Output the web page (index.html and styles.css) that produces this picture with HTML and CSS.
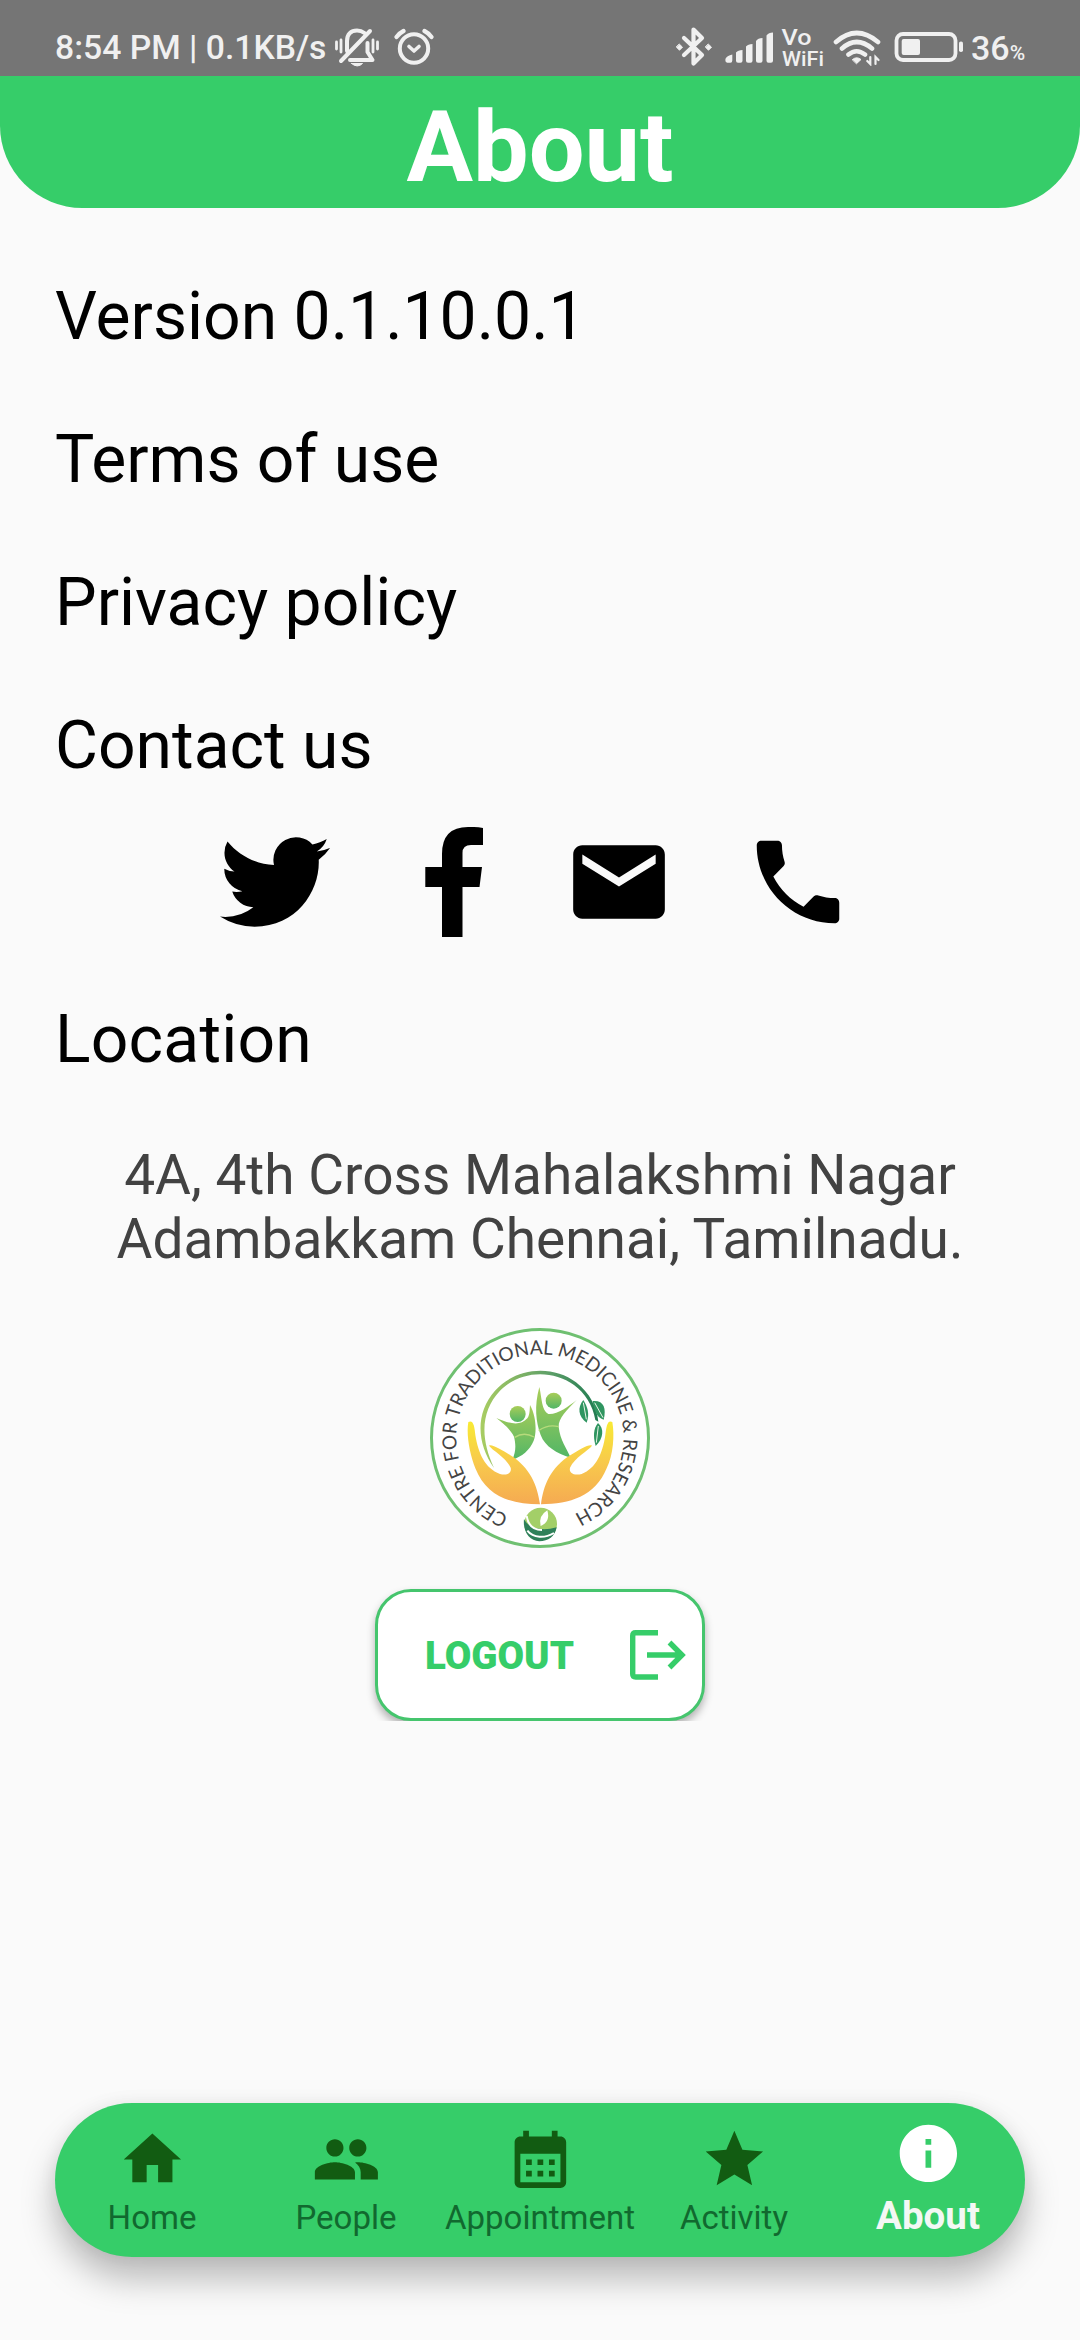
FILE: index.html
```html
<!DOCTYPE html>
<html lang="en">
<head>
<meta charset="utf-8">
<title>About</title>
<link rel="stylesheet" href="styles.css">
</head>
<body>
<div class="screen">
  <div class="status">
    <span class="clock">8:54 PM | 0.1KB/s</span>
    <svg class="bell" width="46" height="40" viewBox="334 28 46 40" fill="none" stroke="#f0f0f0" stroke-width="4" stroke-linecap="round" stroke-linejoin="round">
      <path d="M341 61L370 31M347 51V41C347 34 351 30.500 357 30.500C360 30.500 362.500 31.500 364.500 33M350 60H372.500L367.500 52V43"/>
      <path d="M336.500 42v7M341 40v12M377.500 42v7M373 40v12" stroke-width="2.800"/>
      <path d="M351.500 63.500h11q-5 5-11 0z" fill="#f0f0f0" stroke-width="1"/>
    </svg>
    <svg class="alarm" width="40" height="38" viewBox="393.500 28 40 38" fill="none" stroke="#f0f0f0" stroke-linecap="round" stroke-linejoin="round">
      <circle cx="413.500" cy="48.500" r="14.200" stroke-width="4"/>
      <path d="M396 37q3-4 7-6M431 37q-3-4-7-6" stroke-width="4.200"/>
      <path d="M408.500 46.500l5 4.500 5-4.500" stroke-width="3.600"/>
    </svg>
    <svg class="bluetooth" width="38" height="40" viewBox="675 27 38 40" fill="none" stroke="#f0f0f0" stroke-width="4.200" stroke-linejoin="round" stroke-linecap="round">
      <path d="M684 38l18 17-8.500 8.500V29.500L702 38l-18 17"/>
      <path d="M679.500 44.200l3 3-3 3-3-3zM708.500 44.200l3 3-3 3-3-3z" fill="#f0f0f0" stroke-width="1"/>
    </svg>
    <svg class="signal" width="50" height="32" viewBox="725 32 50 32" fill="#f0f0f0">
      <path d="M725.300 60q0-4 7-5.500v6q0 2.200-2 2.200h-3q-2 0-2-2.700zM736 52.500q2-2.500 6.500-2.500v10.700q0 2-2 2H738q-2 0-2-2zM746 46.500q2-2.500 6.500-2.500v16.700q0 2-2 2H748q-2 0-2-2zM756 41q2-3 6.500-3v22.700q0 2-2 2H758q-2 0-2-2zM766.500 35.500q2-3 6.500-3v28.200q0 2-2 2h-2.500q-2 0-2-2z"/>
    </svg>
    <svg class="vowifi" width="44" height="54" viewBox="781 20 44 54" fill="#f0f0f0">
      <text x="781.500" y="44.800" font-size="22" textLength="30" lengthAdjust="spacingAndGlyphs">Vo</text>
      <text x="782" y="66" font-size="21" textLength="42" lengthAdjust="spacingAndGlyphs">WiFi</text>
    </svg>
    <svg class="wifi" width="48" height="36" viewBox="833 30 48 36" fill="none" stroke="#f0f0f0" stroke-width="4.600" stroke-linecap="round">
      <path d="M836 42Q856.500 24 878 42M842 48.500Q856.500 35.500 872 48.500M848.500 54.500Q856.500 48 865 54.500"/>
      <path d="M852.500 59.500q4-3.500 8.500 0l-4.300 4z" fill="#f0f0f0" stroke-width="1"/>
      <path d="M870.300 57v7l-3-3M875.500 64v-7l3 3" stroke-width="2.200"/>
    </svg>
    <svg class="battery" width="70" height="32" viewBox="894 31 70 32">
      <rect x="896.500" y="34" width="59" height="26" rx="6.500" fill="none" stroke="#f0f0f0" stroke-width="3.800"/>
      <rect x="901.700" y="39" width="18.300" height="16" rx="2" fill="#f0f0f0"/>
      <rect x="959" y="41.500" width="4" height="10.500" rx="1.800" fill="#f0f0f0"/>
    </svg>
    <span class="charge">36<small>%</small></span>
  </div>

  <header class="header"><h1>About</h1></header>

  <main class="content">
    <p class="row">Version 0.1.10.0.1</p>
    <p class="row">Terms of use</p>
    <p class="row">Privacy policy</p>
    <p class="row">Contact us</p>
    <div class="contacts">
      <svg class="twitter" viewBox="0 0 24 24"><path d="M23.953 4.57a10 10 0 01-2.825.775 4.958 4.958 0 002.163-2.723c-.951.555-2.005.959-3.127 1.184a4.92 4.92 0 00-8.384 4.482C7.690 8.095 4.067 6.130 1.640 3.162a4.822 4.822 0 00-.666 2.475c0 1.710.870 3.213 2.188 4.096a4.904 4.904 0 01-2.228-.616v.060a4.923 4.923 0 003.946 4.827 4.996 4.996 0 01-2.212.085 4.936 4.936 0 004.604 3.417 9.867 9.867 0 01-6.102 2.105c-.390 0-.779-.023-1.170-.067a13.995 13.995 0 007.557 2.209c9.053 0 13.998-7.496 13.998-13.985 0-.210 0-.420-.015-.630A9.935 9.935 0 0024 4.590z"/></svg>
      <svg class="facebook" viewBox="425 827 58 110"><path d="M442 937V887H425.300V867H442V854Q442 827 468 827Q476 826.700 483 828V845H471Q462.500 845 462.500 853V867H482L479.500 887H462.500V937Z"/></svg>
      <svg class="mail" viewBox="0 0 24 24"><path d="M20 4H4c-1.100 0-1.990.900-1.990 2L2 18c0 1.100.900 2 2 2h16c1.100 0 2-.900 2-2V6c0-1.100-.900-2-2-2zm0 4l-8 5-8-5V6l8 5 8-5v2z"/></svg>
      <svg class="phone" viewBox="0 0 24 24"><path d="M6.620 10.790c1.440 2.830 3.760 5.140 6.590 6.590l2.200-2.200c.270-.270.670-.360 1.020-.240 1.120.370 2.330.570 3.570.570.550 0 1 .450 1 1V20c0 .550-.450 1-1 1-9.390 0-17-7.610-17-17 0-.550.450-1 1-1h3.500c.550 0 1 .450 1 1 0 1.250.200 2.450.570 3.570.110.350.030.740-.250 1.020l-2.200 2.200z"/></svg>
    </div>
    <p class="row location">Location</p>
    <p class="address">4A, 4th Cross Mahalakshmi Nagar<br>Adambakkam Chennai, Tamilnadu.</p>
    <svg class="logo" viewBox="30 24 660 660">
      <defs>
        <linearGradient id="hand" x1="0" y1="0" x2="0" y2="1"><stop offset="0" stop-color="#f8ea35"/><stop offset=".5" stop-color="#f8c94c"/><stop offset="1" stop-color="#f5aa52"/></linearGradient>
        <linearGradient id="body" x1="0" y1="0" x2="0" y2="1"><stop offset="0" stop-color="#a9cd58"/><stop offset="1" stop-color="#52b666"/></linearGradient>
        <linearGradient id="stem" x1="0" y1="0" x2="1" y2="0"><stop offset="0" stop-color="#a9cd62"/><stop offset=".6" stop-color="#5c9e68"/><stop offset="1" stop-color="#1f7a50"/></linearGradient>
        <path id="ring" d="M266 586.700A251 251 0 1 1 462 583"/>
      </defs>
      <circle cx="360" cy="354" r="325.500" fill="#fff" stroke="#6fc071" stroke-width="9"/>
      <text class="ringtext" textLength="1375" lengthAdjust="spacingAndGlyphs"><textPath href="#ring" textLength="1375" lengthAdjust="spacingAndGlyphs">CENTRE FOR TRADITIONAL MEDICINE &amp; RESEARCH</textPath></text>
      <path fill="url(#stem)" d="M222 444C170 370 165 280 225 212C290 140 400 135 468 187C510 220 530 260 535 305L526 300C518 255 495 220 462 195C395 147 300 152 240 212C185 270 178 350 222 444Z"/>
      <g fill="#2f9560">
        <path d="M490 240C472 262 474 290 500 308C510 280 502 260 490 240Z"/>
        <path d="M518 243C550 240 560 262 551 299C528 292 522 268 518 243Z"/>
        <path d="M534 309C553 325 551 355 527 378C519 350 520 325 534 309Z"/>
      </g>
      <path d="M490 248l9 50M524 248l25 45M535 318l-6 50" stroke="#e8f5e8" stroke-width="3" fill="none"/>
      <g fill="url(#body)">
        <circle cx="293" cy="282" r="24"/>
        <path d="M229 294C265 310 300 320 322 295C330 285 329 265 330 255C350 290 350 340 341 362C330 390 305 410 277 419C288 395 288 375 282 350C270 325 250 312 229 294Z"/>
        <circle cx="401" cy="242" r="24"/>
        <path d="M358 201C366 235 364 270 385 282C410 285 445 260 470 240C440 270 415 295 416 320C420 360 440 385 452 413C410 400 375 380 362 345C348 305 342 260 358 201Z"/>
      </g>
      <path d="M284 352q28-18 58-1M356 332q28-20 60-12" stroke="#b7da7b" stroke-width="4" fill="none"/>
      <g fill="url(#hand)">
        <path d="M145 306C160 298 164 320 166 345C175 400 195 445 240 462C262 468 276 458 272 443C258 412 218 392 207 377C215 371 245 390 270 405C330 442 352 495 360 553C270 552 200 530 166 445C150 405 138 345 145 306Z"/>
        <path d="M577 306C562 298 559 320 556 345C548 400 528 445 485 462C462 468 446 458 450 443C464 412 505 392 516 377C508 371 480 388 452 405C392 442 370 495 363 553C450 552 525 530 560 445C580 405 584 345 577 306Z"/>
      </g>
      <circle cx="362" cy="612" r="49" fill="#a3cf68"/>
      <path d="M312 597C325 625 365 635 410 622C405 650 385 664 358 664C328 662 308 635 312 597Z" fill="#2e8059"/>
      <path d="M320 588C325 620 345 630 366 630M322 632C340 655 375 655 402 639" stroke="#fff" stroke-width="6" fill="none"/>
      <path d="M382 571Q392 606 362 618Q354 588 382 571Z" fill="#fff"/>
    </svg>
    <div class="logout-clip">
      <button class="logout"><span>LOGOUT</span>
        <svg width="56" height="51" viewBox="630 1630 56 51" fill="none" stroke="#36cd69" stroke-width="5.400"><path d="M658 1632.700H635.700Q632.700 1632.700 632.700 1635.700V1674Q632.700 1677 635.700 1677H658M647 1655H682M669.500 1642.500L682 1655L669.500 1667.500"/></svg>
      </button>
    </div>
  </main>

  <nav class="nav">
    <a class="item"><svg viewBox="0 0 24 24"><path d="M10 20v-6h4v6h5v-8h3L12 3 2 12h3v8z"/></svg><span>Home</span></a>
    <a class="item"><svg viewBox="0 0 24 24"><path d="M16 11c1.660 0 2.990-1.340 2.990-3S17.660 5 16 5s-3 1.340-3 3 1.340 3 3 3zm-8 0c1.660 0 2.990-1.340 2.990-3S9.660 5 8 5 5 6.340 5 8s1.340 3 3 3zm0 2c-2.330 0-7 1.170-7 3.500V19h14v-2.500c0-2.330-4.670-3.500-7-3.500zm8 0c-.290 0-.620.020-.970.050 1.160.840 1.970 1.970 1.970 3.450V19h6v-2.500c0-2.330-4.670-3.500-7-3.500z"/></svg><span>People</span></a>
    <a class="item"><svg viewBox="0 0 24 24"><path d="M19 4h-1V2h-2v2H8V2H6v2H5c-1.110 0-1.990.900-1.990 2L3 20c0 1.100.890 2 2 2h14c1.100 0 2-.900 2-2V6c0-1.100-.900-2-2-2zm0 16H5V10h14v10zM9 14H7v-2h2v2zm4 0h-2v-2h2v2zm4 0h-2v-2h2v2zm-8 4H7v-2h2v2zm4 0h-2v-2h2v2zm4 0h-2v-2h2v2z"/></svg><span>Appointment</span></a>
    <a class="item"><svg viewBox="0 0 24 24"><path d="M12 17.270L18.180 21l-1.640-7.030L22 9.240l-7.190-.610L12 2 9.190 8.630 2 9.240l5.460 4.730L5.820 21z"/></svg><span>Activity</span></a>
    <a class="item active"><svg viewBox="0 0 24 24"><path d="M12 2C6.480 2 2 6.480 2 12s4.480 10 10 10 10-4.480 10-10S17.520 2 12 2zm1 15h-2v-6h2v6zm0-8h-2V7h2v2z"/></svg><span>About</span></a>
  </nav>
</div>
</body>
</html>
```
FILE: styles.css
```css
* { box-sizing: border-box; margin: 0; padding: 0; }
body { background: #fafafa; font-family: Roboto, "Liberation Sans", sans-serif; }
svg { display: block; flex: none; }
.screen { width: 1080px; height: 2340px; display: flex; flex-direction: column; overflow: hidden; }

.status { height: 76px; background: #757575; color: #f0f0f0; display: flex; align-items: flex-start; padding-left: 55px; font-size: 34px; font-weight: 500; line-height: 40px; }
.clock { width: 279px; margin-top: 28px; white-space: nowrap; font-size: 33.7px; }
.bell { margin-top: 28px; }
.alarm { margin: 28px 0 0 13.5px; }
.bluetooth { margin: 27px 0 0 241.5px; }
.signal { margin: 32px 0 0 12px; }
.vowifi { margin: 20px 0 0 6px; font-weight: 500; overflow: visible; }
.wifi { margin: 30px 0 0 8px; }
.battery { margin: 31px 0 0 13px; }
.charge { margin: 28px 0 0 7px; white-space: nowrap; }
.charge small { font-size: 21px; }

.header { height: 132px; background: #36cd69; border-radius: 0 0 82.5px 82.5px; display: flex; justify-content: center; }
.header h1 { color: #fff; font-size: 99px; line-height: 116px; font-weight: 700; margin-top: 13px; }

.content { flex: 1; padding: 0 55px; display: flex; flex-direction: column; align-items: center; }
.row { align-self: stretch; font-size: 66px; line-height: 77px; margin-bottom: 66px; color: #000; }
.row:first-child { margin-top: 70px; }
.contacts { display: flex; align-self: stretch; height: 110px; margin: -23px 0 0 165px; }
.twitter, .mail, .phone { width: 110px; height: 110px; }
.facebook { width: 58px; height: 110px; margin: 0 81px 0 95px; }
.phone { margin-left: 69px; }
.location { margin: 64px 0 0; letter-spacing: 0.2px; }
.address { font-size: 55px; line-height: 64px; color: #424242; text-align: center; margin-top: 65px; white-space: nowrap; }
.logo { width: 220px; height: 220px; margin-top: 57px; }
.ringtext { font-family: Lato, sans-serif; font-size: 58px; fill: #444; }
.logout-clip { padding: 41px 30px 0; overflow: hidden; height: 173px; flex: none; }
.logout { width: 330px; height: 132px; background: #fff; border: 3px solid #45c56d; border-radius: 36px; box-shadow: 0 5px 8px rgba(0,0,0,.3); display: flex; align-items: center; justify-content: space-between; padding: 0 16px 0 47px; color: #36cd69; font: 900 38.5px Roboto, sans-serif; }

.nav { height: 154px; width: 970px; margin: 0 55px 83px; border-radius: 77px; background: #36cd69; box-shadow: 0 22px 34px rgba(0,0,0,.26), 0 0 18px rgba(0,0,0,.06); display: grid; grid-template-columns: repeat(5, 1fr); flex: none; }
.item { display: flex; flex-direction: column; align-items: center; padding-top: 22px; color: #11692f; font-size: 33px; line-height: 39px; }
.item svg { width: 68.75px; height: 68.75px; fill: #125c12; }
.item span { margin-top: 4px; }
.active { padding-top: 15.5px; color: #f3f8f4; font-weight: 700; font-size: 38.5px; line-height: 45px; }
.active span { margin-top: 6px; }
.active svg { fill: #fff; }
```
